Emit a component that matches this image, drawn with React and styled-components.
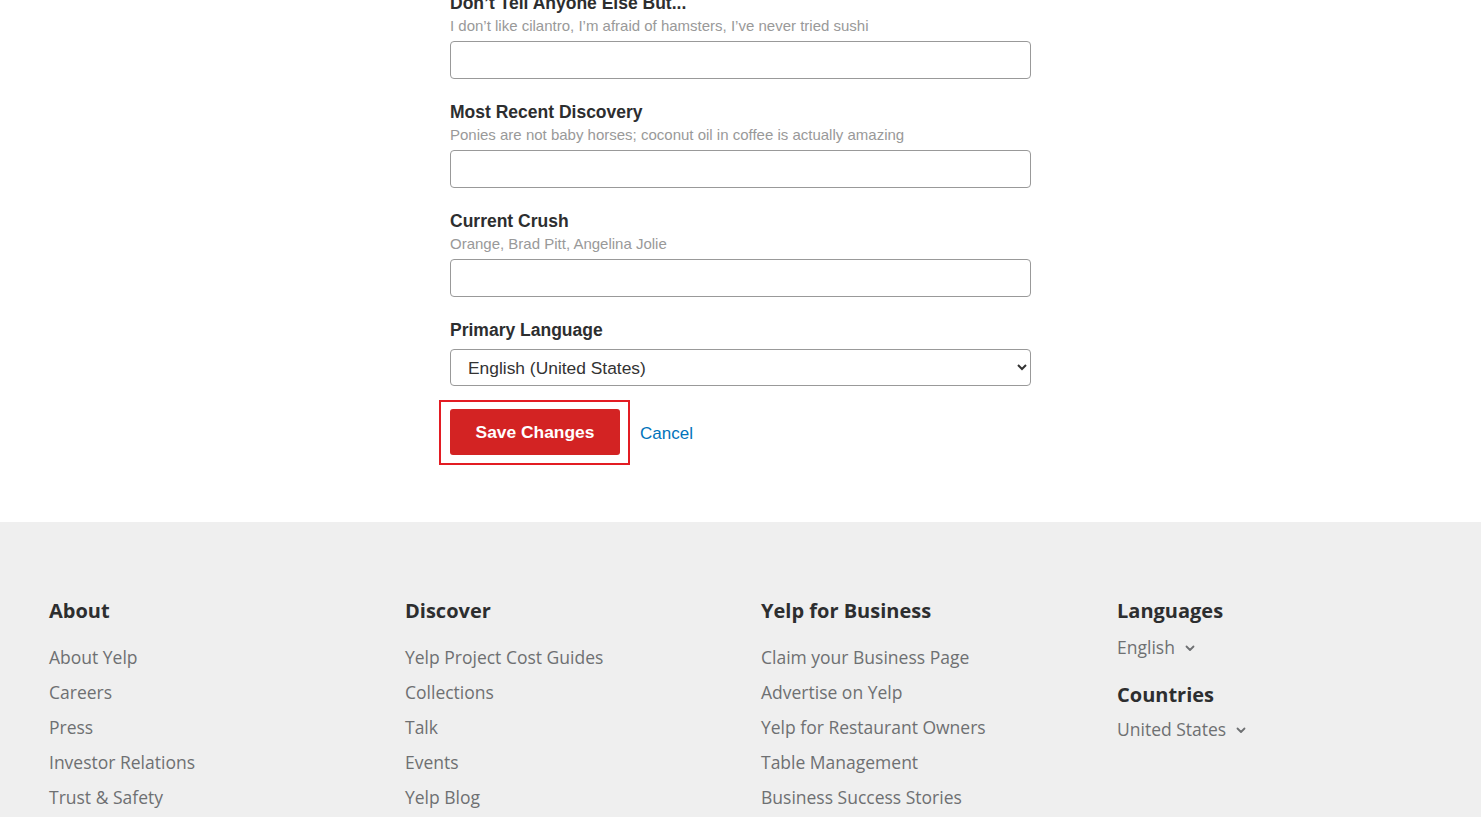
import React, { useState } from 'react';
import styled, { createGlobalStyle } from 'styled-components';

const GlobalStyle = createGlobalStyle`
  html, body {
    margin: 0;
    padding: 0;
    overflow: hidden;
    background: #fff;
  }
`;

const Page = styled.div`
  font-family: "Liberation Sans", Arial, sans-serif;
`;

const FormColumn = styled.form`
  width: 581px;
  margin: -8px auto 0;
  padding-bottom: 57px;
`;

const Field = styled.div`
  margin-bottom: ${p => p.$gap || 22}px;
`;

const Label = styled.label`
  display: block;
  font-size: 17.5px;
  line-height: 22px;
  font-weight: 700;
  color: #2d2e2f;
`;

const Hint = styled.div`
  margin-top: 2px;
  font-size: 15px;
  line-height: 20px;
  color: #999;
`;

const TextInput = styled.input`
  display: block;
  box-sizing: border-box;
  width: 100%;
  height: 38px;
  margin-top: 5px;
  padding: 0 10px;
  border: 1px solid #999;
  border-radius: 4px;
  font-family: inherit;
  font-size: 16px;
  background: #fff;
  outline: none;
`;

const Select = styled.select`
  display: block;
  box-sizing: border-box;
  width: 100%;
  height: 37px;
  margin-top: 8px;
  padding: 0 15px 0 13px;
  border: 1px solid #999;
  border-radius: 4px;
  font-family: inherit;
  font-size: 17.4px;
  color: #333;
  background: #fff;
  outline: none;
`;

const Actions = styled.div`
  display: flex;
  align-items: center;
  gap: 10px;
  margin-left: -11px;
`;

const Highlight = styled.div`
  border: 2px solid #e31c23;
  padding: 7px 8px 8px 9px;
`;

const SaveButton = styled.button`
  width: 170px;
  height: 46px;
  border: none;
  border-radius: 3px;
  background: #d32323;
  color: #fff;
  font-family: inherit;
  font-size: 17.4px;
  font-weight: 700;
  cursor: pointer;
`;

const CancelLink = styled.a`
  color: #0073bb;
  font-size: 17px;
  text-decoration: none;
  margin-top: 2px;
`;

const Footer = styled.footer`
  background: #efefef;
  padding: 75px 0 40px 49px;
  font-family: "Open Sans", sans-serif;
`;

const Columns = styled.div`
  display: grid;
  grid-template-columns: repeat(4, 356px);
`;

const Column = styled.div`
  display: flex;
  flex-direction: column;
`;

const Heading = styled.h3`
  margin: ${p => p.$gap || 0}px 0 0;
  font-size: 20px;
  line-height: 28px;
  font-weight: 700;
  color: #2d2e2f;
`;

const LinkList = styled.ul`
  list-style: none;
  margin: ${p => p.$gap ?? 15}px 0 0;
  padding: 0;
`;

const FooterLink = styled.li`
  display: flex;
  align-items: center;
  gap: 9px;
  font-size: 17.5px;
  line-height: 35px;
  color: #6e7072;
`;

const Chevron = () => (
  <svg width="12" height="12" viewBox="0 0 12 12" fill="none">
    <path d="M2.5 4.5 6 8l3.5-3.5" stroke="#6e7072" strokeWidth="1.8" strokeLinecap="round" strokeLinejoin="round" />
  </svg>
);

const fields = [
  { label: 'Don\u2019t Tell Anyone Else But...', hint: 'I don\u2019t like cilantro, I\u2019m afraid of hamsters, I\u2019ve never tried sushi' },
  { label: 'Most Recent Discovery', hint: 'Ponies are not baby horses; coconut oil in coffee is actually amazing' },
  { label: 'Current Crush', hint: 'Orange, Brad Pitt, Angelina Jolie' },
];

const footerColumns = [
  { title: 'About', links: ['About Yelp', 'Careers', 'Press', 'Investor Relations', 'Trust & Safety'] },
  { title: 'Discover', links: ['Yelp Project Cost Guides', 'Collections', 'Talk', 'Events', 'Yelp Blog'] },
  { title: 'Yelp for Business', links: ['Claim your Business Page', 'Advertise on Yelp', 'Yelp for Restaurant Owners', 'Table Management', 'Business Success Stories'] },
];

export default function App() {
  const [values, setValues] = useState(['', '', '']);
  const [language, setLanguage] = useState('en_US');

  return (
    <Page>
      <GlobalStyle />
      <FormColumn onSubmit={e => e.preventDefault()}>
        {fields.map((f, i) => (
          <Field key={f.label}>
            <Label>{f.label}</Label>
            <Hint>{f.hint}</Hint>
            <TextInput
              type="text"
              value={values[i]}
              onChange={e => setValues(v => v.map((x, j) => (j === i ? e.target.value : x)))}
            />
          </Field>
        ))}
        <Field $gap={14}>
          <Label>Primary Language</Label>
          <Select value={language} onChange={e => setLanguage(e.target.value)}>
            <option value="en_US">English (United States)</option>
            <option value="en_GB">English (United Kingdom)</option>
            <option value="es_ES">Español (España)</option>
            <option value="fr_FR">Français (France)</option>
          </Select>
        </Field>
        <Actions>
          <Highlight>
            <SaveButton type="submit">Save Changes</SaveButton>
          </Highlight>
          <CancelLink href="#">Cancel</CancelLink>
        </Actions>
      </FormColumn>
      <Footer>
        <Columns>
          {footerColumns.map(col => (
            <Column key={col.title}>
              <Heading>{col.title}</Heading>
              <LinkList>
                {col.links.map(l => (
                  <FooterLink key={l}>{l}</FooterLink>
                ))}
              </LinkList>
            </Column>
          ))}
          <Column>
            <Heading>Languages</Heading>
            <LinkList $gap={5}>
              <FooterLink>English <Chevron /></FooterLink>
            </LinkList>
            <Heading $gap={16}>Countries</Heading>
            <LinkList $gap={3}>
              <FooterLink>United States <Chevron /></FooterLink>
            </LinkList>
          </Column>
        </Columns>
      </Footer>
    </Page>
  );
}
